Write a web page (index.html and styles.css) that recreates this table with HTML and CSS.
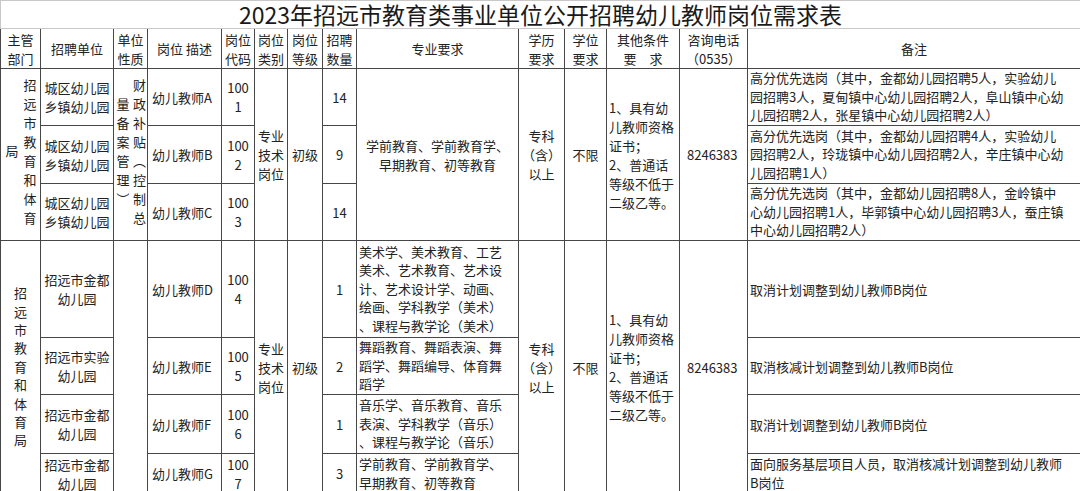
FILE: index.html
```html
<!DOCTYPE html>
<html lang="zh-CN">
<head>
<meta charset="utf-8">
<title>2023年招远市教育类事业单位公开招聘幼儿教师岗位需求表</title>
<link rel="stylesheet" href="styles.css">
</head>
<body>
<table class="sheet">
  <colgroup>
    <col class="w-dept"><col class="w-unit"><col class="w-nature"><col class="w-desc">
    <col class="w-code"><col class="w-type"><col class="w-level"><col class="w-num">
    <col class="w-major"><col class="w-edu"><col class="w-degree"><col class="w-other">
    <col class="w-tel"><col class="w-note">
  </colgroup>
  <tr class="r-title">
    <td colspan="14" class="title">2023年招远市教育类事业单位公开招聘幼儿教师岗位需求表</td>
  </tr>
  <tr class="r-head">
    <th>主管<br>部门</th><th>招聘单位</th><th>单位<br>性质</th><th>岗位 描述</th>
    <th>岗位<br>代码</th><th>岗位<br>类别</th><th>岗位<br>等级</th><th>招聘<br>数量</th>
    <th>专业要求</th><th>学历<br>要求</th><th>学位<br>要求</th><th>其他条件<br>要　求</th>
    <th>咨询电话<br>（0535）</th><th>备注</th>
  </tr>
  <tr class="r-a">
    <td rowspan="3" class="vcell"><div class="vtext">招远市教育和体育<br>局</div></td>
    <td>城区幼儿园<br>乡镇幼儿园</td>
    <td rowspan="3" class="vcell"><div class="vtext narrow">财政补贴（控制总<br>量备案管理）</div></td>
    <td class="left desc">幼儿教师A</td>
    <td>100<br>1</td>
    <td rowspan="3">专业<br>技术<br>岗位</td>
    <td rowspan="3">初级</td>
    <td>14</td>
    <td rowspan="3">学前教育、学前教育学、<br>早期教育、初等教育</td>
    <td rowspan="3">专科<br>（含）<br>以上</td>
    <td rowspan="3">不限</td>
    <td rowspan="3" class="left">1、具有幼<br>儿教师资格<br>证书；<br>2、普通话<br>等级不低于<br>二级乙等。</td>
    <td rowspan="3" class="left tel">8246383</td>
    <td class="left dense">高分优先选岗（其中，金都幼儿园招聘5人，实验幼儿<br>园招聘3人，夏甸镇中心幼儿园招聘2人，阜山镇中心幼<br>儿园招聘2人，张星镇中心幼儿园招聘2人）</td>
  </tr>
  <tr class="r-b">
    <td>城区幼儿园<br>乡镇幼儿园</td>
    <td class="left desc">幼儿教师B</td>
    <td>100<br>2</td>
    <td>9</td>
    <td class="left dense">高分优先选岗（其中，金都幼儿园招聘4人，实验幼儿<br>园招聘2人，玲珑镇中心幼儿园招聘2人，辛庄镇中心幼<br>儿园招聘1人）</td>
  </tr>
  <tr class="r-c">
    <td>城区幼儿园<br>乡镇幼儿园</td>
    <td class="left desc">幼儿教师C</td>
    <td>100<br>3</td>
    <td>14</td>
    <td class="left dense">高分优先选岗（其中，金都幼儿园招聘8人，金岭镇中<br>心幼儿园招聘1人，毕郭镇中心幼儿园招聘3人，蚕庄镇<br>中心幼儿园招聘2人）</td>
  </tr>
  <tr class="r-d">
    <td rowspan="4"><div class="stack">招远市教育和体育局</div></td>
    <td>招远市金都<br>幼儿园</td>
    <td rowspan="4"></td>
    <td class="left desc">幼儿教师D</td>
    <td>100<br>4</td>
    <td rowspan="4">专业<br>技术<br>岗位</td>
    <td rowspan="4">初级</td>
    <td>1</td>
    <td class="left dense">美术学、美术教育、工艺<br>美术、艺术教育、艺术设<br>计、艺术设计学、动画、<br>绘画、学科教学（美术）<br>、课程与教学论（美术）</td>
    <td rowspan="4">专科<br>（含）<br>以上</td>
    <td rowspan="4">不限</td>
    <td rowspan="4" class="left">1、具有幼<br>儿教师资格<br>证书；<br>2、普通话<br>等级不低于<br>二级乙等。</td>
    <td rowspan="4" class="left tel">8246383</td>
    <td class="left">取消计划调整到幼儿教师B岗位</td>
  </tr>
  <tr class="r-e">
    <td>招远市实验<br>幼儿园</td>
    <td class="left desc">幼儿教师E</td>
    <td>100<br>5</td>
    <td>2</td>
    <td class="left dense">舞蹈教育、舞蹈表演、舞<br>蹈学、舞蹈编导、体育舞<br>蹈学</td>
    <td class="left">取消核减计划调整到幼儿教师B岗位</td>
  </tr>
  <tr class="r-f">
    <td>招远市金都<br>幼儿园</td>
    <td class="left desc">幼儿教师F</td>
    <td>100<br>6</td>
    <td>1</td>
    <td class="left dense">音乐学、音乐教育、音乐<br>表演、学科教学（音乐）<br>、课程与教学论（音乐）</td>
    <td class="left">取消计划调整到幼儿教师B岗位</td>
  </tr>
  <tr class="r-g">
    <td>招远市金都<br>幼儿园</td>
    <td class="left desc">幼儿教师G</td>
    <td>100<br>7</td>
    <td>3</td>
    <td class="left dense">学前教育、学前教育学、<br>早期教育、初等教育</td>
    <td class="left dense">面向服务基层项目人员，取消核减计划调整到幼儿教师<br>B岗位</td>
  </tr>
</table>
</body>
</html>
```

FILE: styles.css
```css
html, body {
  margin: 0;
  padding: 0;
  background: #ffffff;
}

body {
  font-family: "Noto Sans CJK SC", "Noto Sans", sans-serif;
  color: #222222;
}

.sheet {
  border-collapse: collapse;
  table-layout: fixed;
  width: 1080px;
  font-size: 13px;
  line-height: 19px;
}

.w-dept { width: 40px; }
.w-unit { width: 73px; }
.w-nature { width: 34px; }
.w-desc { width: 74px; }
.w-code { width: 33px; }
.w-type { width: 33px; }
.w-level { width: 35px; }
.w-num { width: 34px; }
.w-major { width: 162px; }
.w-edu { width: 46px; }
.w-degree { width: 42px; }
.w-other { width: 73px; }
.w-tel { width: 68px; }
.w-note { width: 333px; }

.sheet td,
.sheet th {
  border: 1px solid #474747;
  padding: 0 2px;
  text-align: center;
  vertical-align: middle;
  font-weight: normal;
  overflow: hidden;
  white-space: nowrap;
}

.sheet .left {
  text-align: left;
}

.sheet .desc {
  padding-left: 4px;
}

.sheet .dense {
  line-height: 18.5px;
}

.sheet .tel {
  padding-left: 7px;
}

.sheet .title {
  border-color: #c8c8c8;
  font-size: 23px;
  line-height: 27px;
  height: 27px;
  padding: 0;
  color: #1a1a1a;
  overflow: visible;
}

.r-head th { height: 39px; }
.r-a td { height: 56px; }
.r-b td { height: 57px; }
.r-c td { height: 56px; }
.r-d td { height: 96px; }
.r-e td { height: 56px; }
.r-f td { height: 58px; }
.r-g td { height: 39px; }

.sheet .vcell {
  padding: 0;
}

.vtext {
  display: inline-block;
  writing-mode: vertical-rl;
  height: 158px;
  line-height: 18px;
  letter-spacing: 6px;
  text-align: center;
  vertical-align: middle;
}

.vtext.narrow {
  line-height: 16.5px;
}

.stack {
  width: 13px;
  margin: 0 auto;
  white-space: normal;
  line-height: 18.4px;
}
```
